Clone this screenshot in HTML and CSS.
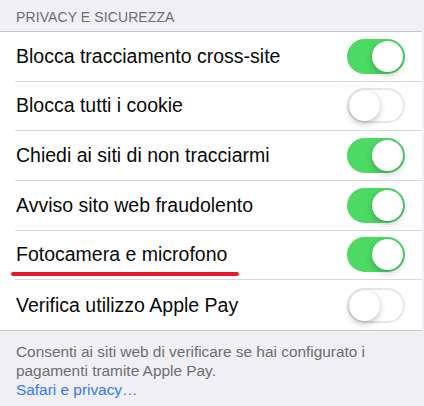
FILE: index.html
```html
<!DOCTYPE html>
<html lang="it">
<head>
<meta charset="utf-8">
<link rel="stylesheet" href="styles.css">
</head>
<body>
<div class="page">
  <div class="section-header">PRIVACY E SICUREZZA</div>
  <div class="group">
    <div class="row"><span class="label">Blocca tracciamento cross-site</span><span class="toggle on"><span class="knob"></span></span></div>
    <div class="row"><span class="label">Blocca tutti i cookie</span><span class="toggle"><span class="knob"></span></span></div>
    <div class="row"><span class="label">Chiedi ai siti di non tracciarmi</span><span class="toggle on"><span class="knob"></span></span></div>
    <div class="row"><span class="label">Avviso sito web fraudolento</span><span class="toggle on"><span class="knob"></span></span></div>
    <div class="row"><span class="label marked">Fotocamera e microfono</span><span class="toggle on"><span class="knob"></span></span></div>
    <div class="row"><span class="label">Verifica utilizzo Apple Pay</span><span class="toggle"><span class="knob"></span></span></div>
  </div>
  <div class="footer">
    <p>Consenti ai siti web di verificare se hai configurato i pagamenti tramite Apple Pay.</p>
    <a class="link">Safari e privacy…</a>
  </div>
</div>
</body>
</html>
```

FILE: styles.css
```css
* { box-sizing: border-box; }
html, body { margin: 0; padding: 0; }
body {
  background: #efeff4;
  font-family: "Liberation Sans", Arial, sans-serif;
  width: 424px;
  height: 406px;
  overflow: hidden;
}
.page {
  display: flex;
  flex-direction: column;
  padding-right: 2px;
}
.section-header {
  height: 32px;
  padding: 9px 16px 0;
  font-size: 14px;
  color: #6d6d72;
  letter-spacing: 0.1px;
  border-bottom: 1px solid #c8c7cc;
}
.group {
  background: #fff;
  display: flex;
  flex-direction: column;
  border-bottom: 1px solid #c8c7cc;
}
.row {
  height: 49.67px;
  margin-left: 15px;
  padding-right: 17px;
  display: flex;
  align-items: center;
  justify-content: space-between;
  border-bottom: 1px solid #d9d9dc;
}
.row:last-child { border-bottom: none; }
.label {
  font-size: 19.5px;
  color: #0a0a0a;
  position: relative;
  padding-left: 1px;
}
.label.marked::after {
  content: "";
  position: absolute;
  left: -4px;
  right: -12px;
  bottom: -10px;
  height: 4px;
  border-radius: 2px;
  background: #e8192c;
}
.toggle {
  width: 58px;
  height: 35px;
  border-radius: 18px;
  background: #fff;
  border: 2px solid #e6e6e6;
  display: flex;
  align-items: center;
  justify-content: flex-start;
  padding: 0;
}
.toggle.on {
  background: #4cd964;
  border-color: #4cd964;
  justify-content: flex-end;
}
.knob {
  width: 31px;
  height: 31px;
  border-radius: 50%;
  background: #fff;
  box-shadow: 0 3px 6px rgba(0,0,0,0.22), 0 0 1px rgba(0,0,0,0.18);
}
.footer {
  padding: 11px 16px 0;
  font-size: 15.4px;
  line-height: 19px;
  color: #6d6d72;
}
.footer p { margin: 0; }
.link { color: #3478f6; }
```
